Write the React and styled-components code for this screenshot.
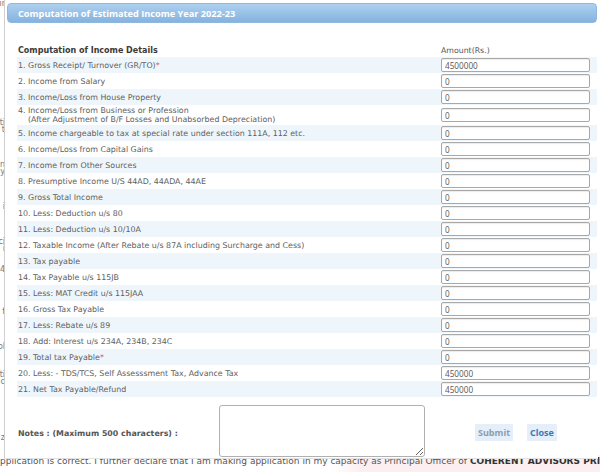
import React from 'react';
import styled, { createGlobalStyle } from 'styled-components';

const Global = createGlobalStyle`
  html, body { margin: 0; padding: 0; background: #fff; }
  body {
    width: 600px; height: 472px; overflow: hidden;
    font-family: "DejaVu Sans", "Open Sans", sans-serif;
  }
  * { box-sizing: border-box; }
`;

const Page = styled.div`
  position: relative;
  width: 600px;
  height: 472px;
  overflow: hidden;
  background: #fff;
  display: grid;
  grid-template-rows: 455px 17px;
`;

const BackColumn = styled.div`
  width: 5px;
  overflow: hidden;
  display: flex;
  flex-direction: column;
  align-items: flex-end;
  font-size: 8px;
  line-height: 7px;
  color: #777;
  white-space: nowrap;
`;

const BackLine = styled.div`
  height: 7px;
  text-align: right;
  direction: rtl;
`;

const BackFooter = styled.div`
  font-family: "DejaVu Sans", sans-serif;
  font-size: 9px;
  line-height: 13px;
  color: #555;
  white-space: nowrap;
  overflow: hidden;
  background: linear-gradient(90deg, #fff 0, #fff 330px, #fbeff1 360px, #fbeff1 100%);
`;

const Strong = styled.b`
  color: #333;
`;

const Dialog = styled.div`
  position: absolute;
  left: 4px;
  top: 0;
  width: 594px;
  height: 459px;
  background: #fff;
  border-left: 1px solid #cfcfcf;
  border-bottom: 1px solid #e2e2e2;
  padding: 3px 1px 0 2px;
  display: flex;
  flex-direction: column;
`;

const TitleBar = styled.div`
  height: 20px;
  flex: none;
  border-radius: 4px;
  border: 1px solid #8fb8de;
  background: linear-gradient(#add0ef, #84b3df);
  color: #fff;
  font-family: "Open Sans", "DejaVu Sans", sans-serif;
  font-weight: 700;
  font-size: 9.2px;
  padding-left: 10px;
  display: flex;
  align-items: center;
`;

const Body = styled.div`
  padding: 21px 0 0 10px;
  display: flex;
  flex-direction: column;
`;

const Row = styled.div`
  display: grid;
  grid-template-columns: 1fr 160px;
  align-items: center;
  min-height: ${(p) => (p.$tall ? 20 : 16)}px;
  background: ${(p) => (p.$striped ? '#eef6fc' : '#fff')};
`;

const HeadRow = styled(Row)`
  min-height: 13px;
  align-items: end;
`;

const HeadLabel = styled.div`
  font-size: 8px;
  font-weight: 600;
  color: #3a3a3a;
  padding-left: 1px;
  line-height: 12px;
`;

const HeadAmount = styled.div`
  font-size: 7.8px;
  color: #555;
  padding-left: 4px;
  line-height: 12px;
`;

const Label = styled.div`
  font-size: 7.9px;
  color: #5e5e5e;
  padding-left: 1px;
  line-height: 9px;
  white-space: pre;
`;

const Req = styled.span`
  color: #e05050;
`;

const Cell = styled.div`
  padding: 0 7px 0 4px;
  display: flex;
  align-items: center;
`;

const AmountInput = styled.input`
  width: 149px;
  height: 14px;
  border: 1px solid #a8a8a8;
  border-radius: 2px;
  box-shadow: inset 0 1px 1px rgba(0, 0, 0, 0.08);
  background: #fff;
  font-family: "Open Sans", "DejaVu Sans", sans-serif;
  font-size: 8.2px;
  color: #555;
  padding: 0 3px;
  outline: none;
`;

const NotesRow = styled.div`
  display: flex;
  align-items: center;
  margin-top: 8px;
  padding-left: 1px;
`;

const NotesLabel = styled.div`
  width: 201px;
  font-size: 7.9px;
  font-weight: 600;
  color: #555;
  padding-top: 5px;
`;

const Notes = styled.textarea`
  width: 206px;
  height: 52px;
  border: 1px solid #b0b0b0;
  border-radius: 3px;
  resize: both;
  font-family: inherit;
  outline: none;
`;

const Actions = styled.div`
  display: flex;
  gap: 14px;
  margin-left: 50px;
  margin-top: 2px;
`;

const Button = styled.button`
  height: 17px;
  padding: 0 3px;
  border: none;
  border-radius: 1px;
  background: #e4eff9;
  font-family: "Open Sans", "DejaVu Sans", sans-serif;
  font-weight: 700;
  font-size: 9px;
  color: ${(p) => (p.$primary ? '#3b77b8' : '#8d9cad')};
`;

const rows = [
  ['1. Gross Receipt/ Turnover (GR/TO)', '4500000', true],
  ['2. Income from Salary', '0'],
  ['3. Income/Loss from House Property', '0'],
  ['4. Income/Loss from Business or Profession\n    (After Adjustment of B/F Losses and Unabsorbed Depreciation)', '0', false, true],
  ['5. Income chargeable to tax at special rate under section 111A, 112 etc.', '0'],
  ['6. Income/Loss from Capital Gains', '0'],
  ['7. Income from Other Sources', '0'],
  ['8. Presumptive Income U/S 44AD, 44ADA, 44AE', '0'],
  ['9. Gross Total Income', '0'],
  ['10. Less: Deduction u/s 80', '0'],
  ['11. Less: Deduction u/s 10/10A', '0'],
  ['12. Taxable Income (After Rebate u/s 87A including Surcharge and Cess)', '0'],
  ['13. Tax payable', '0'],
  ['14. Tax Payable u/s 115JB', '0'],
  ['15. Less: MAT Credit u/s 115JAA', '0'],
  ['16. Gross Tax Payable', '0'],
  ['17. Less: Rebate u/s 89', '0'],
  ['18. Add: Interest u/s 234A, 234B, 234C', '0'],
  ['19. Total tax Payable', '0', true],
  ['20. Less: - TDS/TCS, Self Assesssment Tax, Advance Tax', '450000'],
  ['21. Net Tax Payable/Refund', '450000'],
];

const backLines = Array.from({ length: 65 }, () => '');
backLines[0] = 'ir';
backLines[17] = 'ti';
backLines[18] = 't';
backLines[23] = 'n';
backLines[24] = 'y';
backLines[29] = 'i';
backLines[34] = 'ci';
backLines[35] = 'i';
backLines[38] = '14';
backLines[44] = 'f';
backLines[49] = 'ol';
backLines[53] = 'ti';
backLines[54] = 'c';
backLines[62] = 'z';

export default function App() {
  return (
    <>
      <Global />
      <Page>
        <BackColumn>
          {backLines.map((t, i) => (
            <BackLine key={i}>{t || '\u00a0'}</BackLine>
          ))}
        </BackColumn>
        <BackFooter>
          pplication is correct. I further declare that I am making application in my capacity as Principal Officer of{' '}
          <Strong>COHERENT ADVISORS PRI</Strong>
        </BackFooter>
        <Dialog>
          <TitleBar>Computation of Estimated Income Year 2022-23</TitleBar>
          <Body>
            <HeadRow>
              <HeadLabel>Computation of Income Details</HeadLabel>
              <HeadAmount>Amount(Rs.)</HeadAmount>
            </HeadRow>
            {rows.map(([label, value, req, tall], i) => (
              <Row key={i} $striped={i % 2 === 0} $tall={tall}>
                <Label>
                  {label}
                  {req && <Req>*</Req>}
                </Label>
                <Cell>
                  <AmountInput defaultValue={value} />
                </Cell>
              </Row>
            ))}
            <NotesRow>
              <NotesLabel>Notes : (Maximum 500 characters) :</NotesLabel>
              <Notes />
              <Actions>
                <Button>Submit</Button>
                <Button $primary>Close</Button>
              </Actions>
            </NotesRow>
          </Body>
        </Dialog>
      </Page>
    </>
  );
}
